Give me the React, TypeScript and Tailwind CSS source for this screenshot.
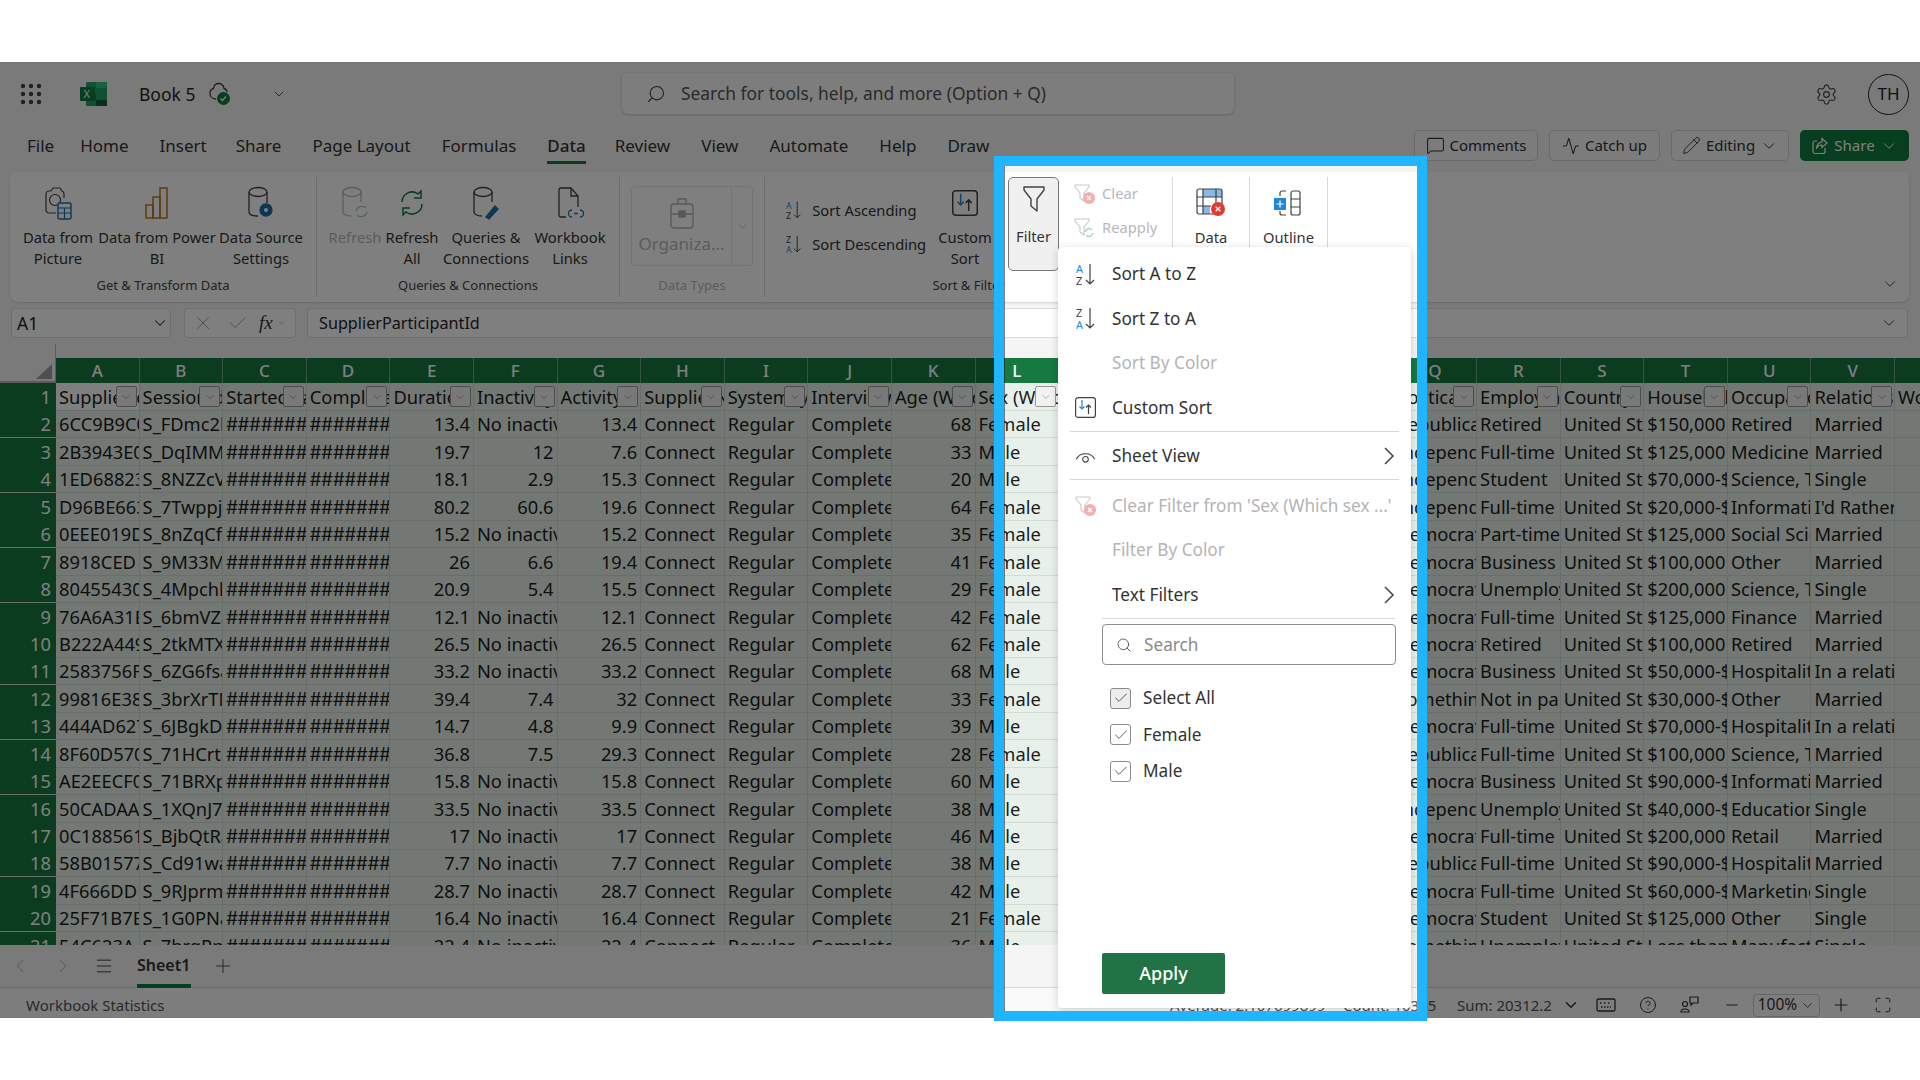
import { Activity, ChevronDown, CircleHelp, Maximize, Menu, Minus, Plus, Search, Settings, Pencil, MessageSquare, X, Check, ChevronLeft, ChevronRight } from "lucide-react";

const INK = "#424242";

const COLS = ["A", "B", "C", "D", "E", "F", "G", "H", "I", "J", "K", "L", "M", "N", "O", "P", "Q", "R", "S", "T", "U", "V", "W"];
const HEADERS = ["SupplierId", "SessionId", "StartedDate", "CompletedDate", "Duration", "Inactivity", "Activity", "SupplierName", "SystemType", "InterviewType", "Age (Which", "Sex (Which", "", "", "", "", "Political", "Employment", "Country", "Household", "Occupation", "Relationship", "Work"];

// id, session, duration, inactivity, activity, age, sex, party, job, income, field, status
const ROWS = [
  ["6CC9B9C0A", "S_FDmc2b", "13.4", "No inactivity", "13.4", "68", "Female", "Republican", "Retired", "$150,000", "Retired", "Married"],
  ["2B3943E0A", "S_DqIMMa", "19.7", "12", "7.6", "33", "Male", "Independent", "Full-time", "$125,000", "Medicine", "Married"],
  ["1ED68823A", "S_8NZZcVa", "18.1", "2.9", "15.3", "20", "Male", "Independent", "Student", "$70,000-$79", "Science, Tech", "Single"],
  ["D96BE663A", "S_7Twppja", "80.2", "60.6", "19.6", "64", "Female", "Independent", "Full-time", "$20,000-$29", "Information", "I'd Rather"],
  ["0EEE019D", "S_8nZqCfa", "15.2", "No inactivity", "15.2", "35", "Female", "Democrat", "Part-time", "$125,000", "Social Science", "Married"],
  ["8918CED", "S_9M33Ma", "26", "6.6", "19.4", "41", "Female", "Democrat", "Business", "$100,000", "Other", "Married"],
  ["80455430", "S_4Mpchla", "20.9", "5.4", "15.5", "29", "Female", "Democrat", "Unemployed", "$200,000", "Science, Tech", "Single"],
  ["76A6A31E", "S_6bmVZa", "12.1", "No inactivity", "12.1", "42", "Female", "Democrat", "Full-time", "$125,000", "Finance", "Married"],
  ["B222A449", "S_2tkMTXa", "26.5", "No inactivity", "26.5", "62", "Female", "Democrat", "Retired", "$100,000", "Retired", "Married"],
  ["2583756F", "S_6ZG6fsa", "33.2", "No inactivity", "33.2", "68", "Male", "Democrat", "Business", "$50,000-$59", "Hospitality", "In a relationship"],
  ["99816E38", "S_3brXrTMa", "39.4", "7.4", "32", "33", "Female", "Something", "Not in paid", "$30,000-$39", "Other", "Married"],
  ["444AD627", "S_6JBgkDa", "14.7", "4.8", "9.9", "39", "Male", "Democrat", "Full-time", "$70,000-$79", "Hospitality", "In a relationship"],
  ["8F60D570", "S_71HCrta", "36.8", "7.5", "29.3", "28", "Female", "Republican", "Full-time", "$100,000", "Science, Tech", "Married"],
  ["AE2EECF0", "S_71BRXpa", "15.8", "No inactivity", "15.8", "60", "Male", "Democrat", "Business", "$90,000-$99", "Information", "Married"],
  ["50CADAA", "S_1XQnJ7a", "33.5", "No inactivity", "33.5", "38", "Male", "Independent", "Unemployed", "$40,000-$49", "Education", "Single"],
  ["0C188561", "S_BjbQtRa", "17", "No inactivity", "17", "46", "Male", "Democrat", "Full-time", "$200,000", "Retail", "Married"],
  ["58B01577", "S_Cd91wa", "7.7", "No inactivity", "7.7", "38", "Male", "Republican", "Full-time", "$90,000-$99", "Hospitality", "Married"],
  ["4F666DD", "S_9RJprma", "28.7", "No inactivity", "28.7", "42", "Male", "Democrat", "Full-time", "$60,000-$69", "Marketing", "Single"],
  ["25F71B7E", "S_1G0PNa", "16.4", "No inactivity", "16.4", "21", "Female", "Democrat", "Student", "$125,000", "Other", "Single"],
  ["54C623A", "S_7hrgPna", "22.4", "No inactivity", "22.4", "36", "Male", "Something", "Unemployed", "Less than $", "Manufacturing", "Single"],
];

function Cell({ text, right, hash }: { text: string; right?: boolean; hash?: boolean }) {
  return (
    <div className={`overflow-hidden whitespace-nowrap border-r border-b border-[#d3dcd5] px-[3px] pt-[1px] leading-[26px] ${right ? "text-right" : ""} ${hash ? "[font-family:Inter,sans-serif]" : ""}`}>
      {text}
    </div>
  );
}

function Funnel({ color = INK, size = 24 }: { color?: string; size?: number }) {
  return (
    <svg width={size} height={(size * 28) / 24} viewBox="0 0 24 28" fill="none" stroke={color} strokeWidth="1.4" strokeLinejoin="round">
      <path d="M2 2h20v3l-7 9v12l-6-5v-7L2 5z" />
    </svg>
  );
}

function RedX({ cx, cy, r }: { cx: number; cy: number; r: number }) {
  return (
    <g>
      <circle cx={cx} cy={cy} r={r} fill="#e53935" stroke="none" />
      <path d={`M${cx - r / 3} ${cy - r / 3}l${(r * 2) / 3} ${(r * 2) / 3}m0 -${(r * 2) / 3}l-${(r * 2) / 3} ${(r * 2) / 3}`} stroke="#fff" strokeWidth="1.3" fill="none" />
    </g>
  );
}

function ClearFunnel({ faded = true }: { faded?: boolean }) {
  return (
    <svg width="22" height="22" viewBox="0 0 22 22" fill="none" className={faded ? "opacity-40" : ""}>
      <path d="M1 2h14v2l-5 6v8l-4-3v-5L1 4z" stroke="#777" strokeWidth="1.1" strokeLinejoin="round" />
      <RedX cx={15} cy={15} r={6} />
    </svg>
  );
}

function SortIcon({ first, second, firstColor, secondColor, size = 1 }: { first: string; second: string; firstColor: string; secondColor: string; size?: number }) {
  return (
    <svg width={19 * size} height={23 * size} viewBox="0 0 19 23" fill="none">
      <text x="0" y="10" fontSize="11" fill={firstColor} fontFamily="Noto Sans, sans-serif">{first}</text>
      <text x="0" y="22" fontSize="11" fill={secondColor} fontFamily="Noto Sans, sans-serif">{second}</text>
      <path d="M14 1v20M10 17l4 4 4-4" stroke={INK} strokeWidth="1.2" />
    </svg>
  );
}

function CustomSortIcon({ w = 21 }: { w?: number }) {
  return (
    <svg width={w} height={w} viewBox="0 0 21 21" fill="none">
      <rect x="0.6" y="0.6" width="19.8" height="19.8" rx="2.5" stroke={INK} strokeWidth="1.2" />
      <path d="M7 3v9M4.5 9.5L7 12l2.5-2.5" stroke="#1e88d8" strokeWidth="1.2" />
      <path d="M13.5 17V8M11 10.5L13.5 8l2.5 2.5" stroke={INK} strokeWidth="1.2" />
    </svg>
  );
}

function BigButton({ w, label, icon, disabled }: { w: number; label: string; icon: React.ReactNode; disabled?: boolean }) {
  return (
    <div className="flex shrink-0 flex-col items-center" style={{ width: w }}>
      <div className="mt-[6px] flex h-[40px] items-center justify-center">{icon}</div>
      <div className={`mt-[4px] whitespace-pre text-center text-[14.75px] leading-[21px] ${disabled ? "text-[#b8b8b8]" : "text-[#333]"}`}>{label}</div>
    </div>
  );
}

function Group({ w, label, disabled, children }: { w: number; label: string; disabled?: boolean; children: React.ReactNode }) {
  return (
    <div className="flex shrink-0 flex-col border-r border-[#d8d8d8]" style={{ width: w }}>
      <div className="flex h-[98px]">{children}</div>
      <div className={`flex h-[22px] items-center justify-center whitespace-nowrap text-[13px] ${disabled ? "text-[#b8b8b8]" : "text-[#444]"}`}>{label}</div>
    </div>
  );
}

function MenuItem({ icon, label, disabled, arrow }: { icon?: React.ReactNode; label: string; disabled?: boolean; arrow?: boolean }) {
  return (
    <div className={`flex h-[44.5px] shrink-0 items-center text-[17.2px] ${disabled ? "text-[#b4b4b4]" : "text-[#333]"}`}>
      <div className="flex w-[54px] shrink-0 justify-center pl-[1px]">{icon}</div>
      <span className="whitespace-nowrap">{label}</span>
      {arrow && (
        <svg width="12" height="20" viewBox="0 0 12 20" fill="none" stroke={INK} strokeWidth="1.5" className="ml-auto mr-[16px]">
          <path d="M2 2l8 8-8 8" />
        </svg>
      )}
    </div>
  );
}

function CheckRow({ label, grey }: { label: string; grey?: boolean }) {
  return (
    <div className="flex h-[36.5px] items-center text-[17.2px] text-[#333]">
      <div className={`ml-[52px] flex h-[21px] w-[21px] items-center justify-center rounded-[3px] border border-[#8a8a8a] ${grey ? "bg-[#ededed]" : "bg-white"}`}>
        <Check size={16} strokeWidth={1.2} color="#333" />
      </div>
      <span className="ml-[12px]">{label}</span>
    </div>
  );
}

function TopButton({ w, icon, label, arrow }: { w: number; icon: React.ReactNode; label: string; arrow?: boolean }) {
  return (
    <div className="flex h-[31px] shrink-0 items-center justify-center gap-[5px] rounded-[5px] border border-[#d4d4d4] bg-[#f8f8f8] text-[15px] text-[#333]" style={{ width: w }}>
      {icon}
      <span>{label}</span>
      {arrow && <ChevronDown size={18} strokeWidth={1.3} />}
    </div>
  );
}

export default function App() {
  const tabs = ["File", "Home", "Insert", "Share", "Page Layout", "Formulas", "Data", "Review", "View", "Automate", "Help", "Draw"];
  return (
    <div className="relative h-[1080px] w-[1920px] overflow-hidden bg-white pt-[62px] text-[#242424] [font-family:'Noto_Sans',sans-serif]">
      <div className="relative flex h-[956px] flex-col overflow-hidden bg-[#f5f5f5]">
        {/* title bar */}
        <div className="relative flex h-[64px] shrink-0 items-center">
          <svg width="22" height="22" viewBox="0 0 22 22" fill={INK} className="ml-[20px]">
            {[3, 11, 19].map((y) => [3, 11, 19].map((x) => <circle key={`${x}${y}`} cx={x} cy={y} r="2.2" />))}
          </svg>
          <svg width="27" height="24" viewBox="0 0 27 24" className="ml-[38px]">
            <rect x="6" width="21" height="24" rx="1.5" fill="#21a366" />
            <rect x="16" width="11" height="6" fill="#33c481" />
            <rect x="6" y="12" width="10" height="6" fill="#107c41" />
            <rect x="16" y="18" width="11" height="6" fill="#185c37" />
            <rect y="5" width="15" height="14" rx="1" fill="#107c41" />
            <text x="3.5" y="16" fontSize="11" fill="#fff" fontFamily="Noto Sans, sans-serif">X</text>
          </svg>
          <span className="ml-[32px] text-[17.5px]">Book 5</span>
          <svg width="24" height="26" viewBox="0 0 24 26" fill="none" className="ml-[13px]">
            <path d="M8 18c-4 0-6-2.500-6-5.500 0-2.500 1.500-4.500 3.500-5C6 4 8 2.500 10.500 2.500c3 0 5 2 5.500 5 2 .5 3 2 3 3.500" stroke={INK} strokeWidth="1.3" />
            <circle cx="15.500" cy="17.500" r="6.500" fill="#107c41" />
            <path d="M12.500 17.500l2 2 3.500-4" stroke="#fff" strokeWidth="1.2" />
          </svg>
          <ChevronDown size={16} strokeWidth={1.4} className="ml-[39px]" color={INK} />
          <div className="absolute left-[622px] top-[11px] flex h-[41px] w-[612px] items-center rounded-[6px] bg-[#fafafa] shadow-[0_1px_3px_rgba(0,0,0,0.2)]">
            <Search size={20} strokeWidth={1.3} className="ml-[24px] -scale-x-100" color={INK} />
            <span className="ml-[15px] text-[17.4px] text-[#555]">Search for tools, help, and more (Option + Q)</span>
          </div>
          <Settings size={23} strokeWidth={1.2} className="ml-auto" color={INK} />
          <div className="ml-[30px] mr-[11px] flex h-[41px] w-[41px] items-center justify-center rounded-full border-[1.5px] border-[#242424] text-[17px]">TH</div>
        </div>

        {/* tabs */}
        <div className="flex h-[40px] shrink-0 items-start">
          <div className="ml-[27px] flex gap-[31px] text-[17px] text-[#333]">
            {tabs.map((t) => (
              <div
                key={t}
                className={`flex h-[38px] items-center whitespace-nowrap border-b-[3px] pt-[5px] ${t === "Data" ? "-mr-[2px] border-[#107c41] font-medium" : "border-transparent"} ${t === "Home" ? "-ml-[5px]" : ""} ${t === "Share" ? "-ml-[2px]" : ""}`}
              >
                {t}
              </div>
            ))}
          </div>
          <div className="ml-auto mr-[11px] mt-[4px] flex gap-[11px]">
            <TopButton w={124} icon={<MessageSquare size={19} strokeWidth={1.3} />} label="Comments" />
            <TopButton w={111} icon={<Activity size={18} strokeWidth={1.4} />} label="Catch up" />
            <TopButton w={118} icon={<Pencil size={19} strokeWidth={1.2} />} label="Editing" arrow />
            <div className="flex h-[31px] w-[109px] items-center justify-center gap-[5px] rounded-[5px] bg-[#107c41] text-[15px] text-white">
              <svg width="18" height="18" viewBox="0 0 18 18" fill="none" stroke="#fff" strokeWidth="1.2">
                <path d="M14 11v3.500a2 2 0 0 1-2 2H4a2 2 0 0 1-2-2V6a2 2 0 0 1 2-2h2" />
                <path d="M11 1.500l5 4.500-5 4.500V8C8 8 6 9.500 5.500 12c0-4 2-6.500 5.500-7z" />
              </svg>
              <span>Share</span>
              <ChevronDown size={18} strokeWidth={1.3} />
            </div>
          </div>
        </div>

        {/* ribbon */}
        <div className="ml-[10px] mt-[6px] flex h-[130px] w-[1899px] shrink-0 rounded-[8px] bg-white py-[5px] shadow-[0_1px_2px_rgba(0,0,0,0.15)]">
          <Group w={307} label="Get & Transform Data">
            <div className="w-[7px]" />
            <BigButton w={82} label={"Data from\nPicture"} icon={
              <svg width="28" height="36" viewBox="0 0 28 36" fill="none" stroke={INK} strokeWidth="1.2">
                <path d="M12 28H5a3 3 0 0 1-3-3V9a3 3 0 0 1 3-3h2l2-3h7l2 3a3 3 0 0 1 2 3v4" />
                <circle cx="11" cy="15" r="5.500" />
                <rect x="14" y="18" width="13" height="16" rx="1.500" fill="#fff" stroke="#1a6fa8" strokeWidth="1.4" />
                <path d="M14 23h13M14 28h13M20.500 23v11" stroke="#1a6fa8" />
              </svg>
            } />
            <BigButton w={116} label={"Data from Power\nBI"} icon={
              <svg width="24" height="34" viewBox="0 0 24 34" fill="none" stroke="#b7791f" strokeWidth="1.5">
                <rect x="15" y="2" width="7" height="30" />
                <rect x="8" y="11" width="7" height="21" />
                <rect x="1" y="19" width="7" height="13" />
              </svg>
            } />
            <BigButton w={92} label={"Data Source\nSettings"} icon={
              <svg width="28" height="36" viewBox="0 0 28 36" fill="none" stroke={INK} strokeWidth="1.3">
                <ellipse cx="11" cy="7" rx="9" ry="4.500" />
                <path d="M2 7v20c0 2 3 4 9 4M20 7v11" />
                <circle cx="19" cy="25" r="6" fill="#1a6fa8" stroke="#1a6fa8" />
                <circle cx="19" cy="25" r="2" fill="#fff" stroke="none" />
              </svg>
            } />
          </Group>
          <Group w={303} label="Queries & Connections">
            <div className="w-[13px]" />
            <BigButton w={50} label="Refresh" disabled icon={
              <svg width="28" height="36" viewBox="0 0 28 36" fill="none" stroke="#b8b8b8" strokeWidth="1.3">
                <ellipse cx="11" cy="7" rx="9" ry="4.500" />
                <path d="M2 7v20c0 2 3 4 8 4M20 7v10" />
                <path d="M15 26a6 6 0 0 1 10-3M26 27a6 6 0 0 1-10 3" stroke="#a9cdb6" />
              </svg>
            } />
            <BigButton w={64} label={"Refresh\nAll"} icon={
              <svg width="26" height="32" viewBox="0 0 26 32" fill="none" stroke="#107c41" strokeWidth="1.5">
                <path d="M3 15a10 10 0 0 1 16-8l3-3v7h-7" />
                <path d="M23 17a10 10 0 0 1-16 8l-3 3v-7h7" />
              </svg>
            } />
            <BigButton w={84} label={"Queries &\nConnections"} icon={
              <svg width="28" height="36" viewBox="0 0 28 36" fill="none" stroke={INK} strokeWidth="1.3">
                <ellipse cx="11" cy="7" rx="9" ry="4.500" />
                <path d="M2 7v20c0 2 3 4 8 4M20 7v10" />
                <path d="M14 32l9-11 3 3-9 10z" fill="#1a6fa8" stroke="#1a6fa8" />
              </svg>
            } />
            <BigButton w={84} label={"Workbook\nLinks"} icon={
              <svg width="28" height="36" viewBox="0 0 28 36" fill="none" stroke={INK} strokeWidth="1.3">
                <path d="M10 32H5a2 2 0 0 1-2-2V5a2 2 0 0 1 2-2h10l7 8v11" />
                <path d="M15 3v8h7" />
                <path d="M16 25a3 3 0 0 0 0 7M24 25a3 3 0 0 1 0 7M18 28.500h4" stroke="#1a6fa8" />
              </svg>
            } />
          </Group>
          <Group w={145} label="Data Types" disabled>
            <div className="ml-[11px] mt-[9px] flex h-[80px] w-[122px] rounded-[5px] border border-[#e8e8e8] text-[#b8b8b8]">
              <div className="flex w-[100px] flex-col items-center border-r border-[#e8e8e8] pt-[9px]">
                <svg width="24" height="34" viewBox="0 0 24 34" fill="none" stroke="#b0b0b0" strokeWidth="1.3">
                  <rect x="1" y="8" width="22" height="24" rx="3" />
                  <path d="M8 8V3h8v5M1 18h22" />
                  <rect x="9" y="15" width="6" height="6" fill="#b0b0b0" />
                </svg>
                <span className="mt-[1px] whitespace-nowrap text-[17px]">Organiza...</span>
              </div>
              <div className="flex flex-1 items-center justify-center"><ChevronDown size={13} strokeWidth={1.4} /></div>
            </div>
          </Group>
          <Group w={408} label="Sort & Filter">
            <div className="ml-[21px] w-[147px] shrink-0 pt-[16px]">
              <div className="flex h-[34px] items-center gap-[8px] whitespace-nowrap text-[14.75px] text-[#333]">
                <SortIcon first="A" second="Z" firstColor="#1e88d8" secondColor={INK} size={0.8} />
                <span className="ml-[3px]">Sort Ascending</span>
              </div>
              <div className="flex h-[34px] items-center gap-[8px] whitespace-nowrap text-[14.75px] text-[#333]">
                <SortIcon first="Z" second="A" firstColor={INK} secondColor="#1e88d8" size={0.8} />
                <span className="ml-[3px]">Sort Descending</span>
              </div>
            </div>
            <BigButton w={64} label={"Custom\nSort"} icon={<CustomSortIcon w={26} />} />
            <div className="ml-[11px] h-[94px] w-[51px] shrink-0 rounded-[5px] border border-[#777] bg-[#f0f0f0] text-center text-[14.75px] text-[#333]">
              <div className="mt-[7px] flex h-[30px] justify-center"><Funnel /></div>
              <div className="mt-[10px]">Filter</div>
            </div>
            <div className="w-[114px] shrink-0 pl-[15px] text-[14.75px] text-[#b8b8b8]">
              <div className="flex h-[33px] items-center gap-[6px]"><ClearFunnel /><span>Clear</span></div>
              <div className="mt-[1px] flex h-[33px] items-center gap-[6px]">
                <svg width="22" height="22" viewBox="0 0 22 22" fill="none" className="opacity-40">
                  <path d="M1 2h14v2l-5 6v8l-4-3v-5L1 4z" stroke="#777" strokeWidth="1.1" strokeLinejoin="round" />
                  <path d="M11 15a4 4 0 0 1 7-2M19 16a4 4 0 0 1-7 2" stroke="#22a05a" strokeWidth="1.4" />
                </svg>
                <span>Reapply</span>
              </div>
            </div>
          </Group>
          <Group w={77} label="">
            <BigButton w={76} label="Data" icon={
              <svg width="30" height="30" viewBox="0 0 30 30" fill="none" stroke={INK} strokeWidth="1.2">
                <rect x="7" y="1" width="19" height="8" fill="#8ab8e6" stroke="none" />
                <rect x="7" y="18" width="7" height="8" fill="#8ab8e6" stroke="none" />
                <rect x="1" y="1" width="25" height="25" rx="2" />
                <path d="M7 1v25M20 1v15M1 9h25M1 18h14" />
                <RedX cx={22} cy={21} r={7} />
              </svg>
            } />
          </Group>
          <Group w={78} label="">
            <BigButton w={77} label="Outline" icon={
              <svg width="30" height="28" viewBox="0 0 30 28" fill="none" stroke={INK} strokeWidth="1.2">
                <path d="M6 7V4a2 2 0 0 1 2-2h4M6 22v2a2 2 0 0 0 2 2h4" />
                <rect x="17" y="2" width="9" height="24" rx="2" />
                <path d="M17 10h9M17 18h9" />
                <rect x="0" y="9" width="12" height="12" fill="#1f87d8" stroke="none" />
                <path d="M6 11.500v7M2.500 15h7" stroke="#fff" />
              </svg>
            } />
          </Group>
          <ChevronDown size={18} strokeWidth={1.3} color={INK} className="mb-[4px] ml-auto mr-[10px] self-end" />
        </div>

        {/* formula bar */}
        <div className="mt-[6px] flex h-[30px] shrink-0 text-[16.2px]">
          <div className="ml-[11px] flex w-[160px] items-center justify-between rounded-[4px] border border-[#dcdcdc] bg-white pl-[5px] pr-[1px] text-[17.5px]">
            <span>A1</span>
            <ChevronDown size={18} strokeWidth={1.4} />
          </div>
          <div className="ml-[13px] flex w-[112px] items-center gap-[13px] rounded-[4px] border border-[#dcdcdc] bg-white px-[7px] text-[#999]">
            <X size={22} strokeWidth={1} />
            <Check size={22} strokeWidth={1} />
            <span className="-ml-[3px] text-[19px] italic text-[#333] [font-family:'Liberation_Serif',serif]">fx</span>
            <ChevronDown size={10} strokeWidth={1.4} className="-ml-[9px]" />
          </div>
          <div className="ml-[11px] flex w-[1601px] items-center justify-between rounded-[4px] border border-[#dcdcdc] bg-white pl-[11px] pr-[9px]">
            <span>SupplierParticipantId</span>
            <ChevronDown size={18} strokeWidth={1.3} color={INK} />
          </div>
        </div>

        {/* sheet */}
        <div className="mt-[6px] h-[601px] shrink-0 overflow-hidden text-[18.3px] text-[#1c1c1c]">
          <div className="flex items-end">
            <div className="flex h-[39px] w-[56px] shrink-0 items-end justify-end border-r border-b-2 border-[#b8b8b8] pb-[2px] pr-[3px]">
              <svg width="16" height="15" viewBox="0 0 16 15"><path d="M16 0v15H0z" fill="#a0a0a0" /></svg>
            </div>
            <div className="grid h-[25px] grid-cols-[repeat(23,83.6px)] bg-[#16793f] text-center text-[17px] font-medium leading-[25px] text-white">
              {COLS.map((c) => (
                <div key={c} className="border-r border-[#6ea986]">{c}</div>
              ))}
            </div>
          </div>
          <div className="grid h-[27.45px] grid-cols-[56px_repeat(23,83.6px)] bg-[#e7f1ea]">
            <div className="border-b border-[#cfe5d6] bg-[#16793f] pr-[5px] pt-[1px] text-right leading-[26px] text-white">1</div>
            {HEADERS.map((h, i) => (
              <div key={i} className={`relative overflow-hidden whitespace-nowrap border-r border-b border-[#d3dcd5] px-[3px] pt-[1px] leading-[26px] ${i === 0 ? "bg-white" : ""}`}>
                {h}
                {i < 22 && (
                  <span className="absolute right-[2px] top-[3px] flex h-[21px] w-[21px] items-center justify-center rounded-[2px] border border-[#9a9a9a] bg-[#f2f2f2]">
                    <ChevronDown size={12} strokeWidth={1} color="#666" />
                  </span>
                )}
              </div>
            ))}
          </div>
          {ROWS.map((r, i) => {
            const empties = [0, 1, 2, 3].map((k) => <Cell key={`e${k}`} text="" />);
            return (
              <div key={i} className="grid h-[27.45px] grid-cols-[56px_repeat(23,83.6px)] bg-[#e7f1ea]">
                <div className="border-b border-[#cfe5d6] bg-[#16793f] pr-[5px] pt-[1px] text-right leading-[26px] text-white">{i + 2}</div>
                <Cell text={r[0]} />
                <Cell text={r[1]} />
                <Cell text="##########" hash />
                <Cell text="##########" hash />
                <Cell text={r[2]} right />
                <Cell text={r[3]} right={r[3] !== "No inactivity"} />
                <Cell text={r[4]} right />
                <Cell text="Connect" />
                <Cell text="Regular" />
                <Cell text="Completed" />
                <Cell text={r[5]} right />
                <Cell text={r[6]} />
                {empties}
                <Cell text={r[7]} />
                <Cell text={r[8]} />
                <Cell text="United States" />
                <Cell text={r[9]} />
                <Cell text={r[10]} />
                <Cell text={r[11]} />
                <Cell text="" />
              </div>
            );
          })}
        </div>

        {/* sheet tabs */}
        <div className="flex h-[43px] shrink-0 items-center border-b border-[#d8d8d8] text-[#555]">
          <ChevronLeft size={22} strokeWidth={0.9} className="ml-[9px]" color="#999" />
          <ChevronRight size={22} strokeWidth={0.9} className="ml-[21px]" color="#999" />
          <Menu size={20} strokeWidth={1.2} className="ml-[20px]" color={INK} />
          <div className="ml-[23px] flex h-[43px] flex-col">
            <span className="flex h-[39px] items-center pt-[1px] text-[16px] font-semibold text-[#333]">Sheet1</span>
            <div className="h-[4px] w-[54px] bg-[#107c41]" />
          </div>
          <Plus size={22} strokeWidth={1} className="ml-[21px]" color={INK} />
        </div>

        {/* status bar */}
        <div className="flex h-[30px] shrink-0 items-center bg-[#fafafa] pt-[4px] text-[15px] text-[#555]">
          <span className="ml-[26px] w-[1144px]">Workbook Statistics</span>
          <span className="w-[173px]">Average: 2.107699899</span>
          <span className="w-[114px]">Count: 10335</span>
          <span className="w-[104px]">Sum: 20312.2</span>
          <div className="flex w-[20px] justify-center"><ChevronDown size={18} strokeWidth={2} color="#333" /></div>
          <div className="flex w-[50px] justify-center">
            <svg width="20" height="14" viewBox="0 0 20 14" fill="none" stroke="#333" strokeWidth="1.3">
              <rect x="1" y="1" width="18" height="12" rx="1.500" />
              <path d="M4 5h2M8 5h2M12 5h2M5 9h10" strokeDasharray="1.500 1.500" />
            </svg>
          </div>
          <div className="flex w-[34px] justify-center"><CircleHelp size={18} strokeWidth={1.3} color="#333" /></div>
          <div className="flex w-[50px] justify-center">
            <svg width="20" height="18" viewBox="0 0 20 18" fill="none" stroke="#333" strokeWidth="1.2">
              <circle cx="5" cy="8" r="2.500" />
              <path d="M1 16a4 3 0 0 1 8 0z" />
              <path d="M10 1h8v6h-5l-2 2V7h-1z" />
            </svg>
          </div>
          <div className="flex w-[34px] justify-center"><Minus size={18} strokeWidth={1.4} color="#333" /></div>
          <div className="ml-[4px] flex h-[23px] w-[67px] items-center justify-center gap-[3px] rounded-[4px] border border-[#ccc] text-[15.5px] text-[#333]">
            <span>100%</span>
            <ChevronDown size={15} strokeWidth={1.3} />
          </div>
          <div className="flex w-[42px] justify-center"><Plus size={20} strokeWidth={1.4} color="#333" /></div>
          <div className="flex w-[42px] justify-center"><Maximize size={18} strokeWidth={1.3} color="#333" /></div>
        </div>

        {/* dimmed page with a cut-out around the filter panel */}
        <div className="absolute left-[1005px] top-[104px] h-[900px] w-[412px] shadow-[0_0_0_3000px_rgba(0,0,0,0.5)]" />

        {/* filter menu */}
        <div className="absolute left-[1058px] top-[185px] z-10 flex h-[761px] w-[353px] flex-col rounded-[4px] bg-white pt-[5px] shadow-[0_2px_8px_rgba(0,0,0,0.18)]">
          <MenuItem label="Sort A to Z" icon={<SortIcon first="A" second="Z" firstColor="#1e88d8" secondColor={INK} />} />
          <MenuItem label="Sort Z to A" icon={<SortIcon first="Z" second="A" firstColor={INK} secondColor="#1e88d8" />} />
          <MenuItem label="Sort By Color" disabled />
          <MenuItem label="Custom Sort" icon={<CustomSortIcon />} />
          <div className="mx-[12px] mt-[1px] h-px shrink-0 bg-[#d8d8d8]" />
          <div className="mt-[2px]">
            <MenuItem label="Sheet View" arrow icon={
              <svg width="21" height="13" viewBox="0 0 22 14" fill="none" stroke={INK} strokeWidth="1.2">
                <path d="M1 10C5 2 17 2 21 10" />
                <circle cx="11" cy="10" r="3" />
              </svg>
            } />
          </div>
          <div className="mx-[12px] h-px shrink-0 bg-[#d8d8d8]" />
          <div className="mt-[4px]">
            <MenuItem label="Clear Filter from 'Sex (Which sex ...'" disabled icon={<ClearFunnel />} />
            <MenuItem label="Filter By Color" disabled />
            <MenuItem label="Text Filters" arrow />
          </div>
          <div className="mx-[44px] mr-[16px] mt-[1px] h-px shrink-0 bg-[#d8d8d8]" />
          <div className="ml-[44px] mt-[5px] flex h-[41px] w-[294px] shrink-0 items-center rounded-[4px] border-[1.5px] border-[#8f8f8f]">
            <Search size={16} strokeWidth={1.4} color="#555" className="ml-[13px]" />
            <span className="ml-[12px] text-[17.2px] text-[#8a8a8a]">Search</span>
          </div>
          <div className="mt-[15px]">
            <CheckRow label="Select All" grey />
            <CheckRow label="Female" />
            <CheckRow label="Male" />
          </div>
          <div className="ml-[44px] mt-[163.5px] flex h-[41px] w-[123px] items-center justify-center rounded-[2px] bg-[#217346] text-[18px] font-medium text-white">Apply</div>
        </div>
      </div>

      {/* highlight frame */}
      <div className="absolute left-[994px] top-[156px] z-20 h-[865px] w-[433px] border-[10.5px] border-[#1fb6ff]" />
    </div>
  );
}
